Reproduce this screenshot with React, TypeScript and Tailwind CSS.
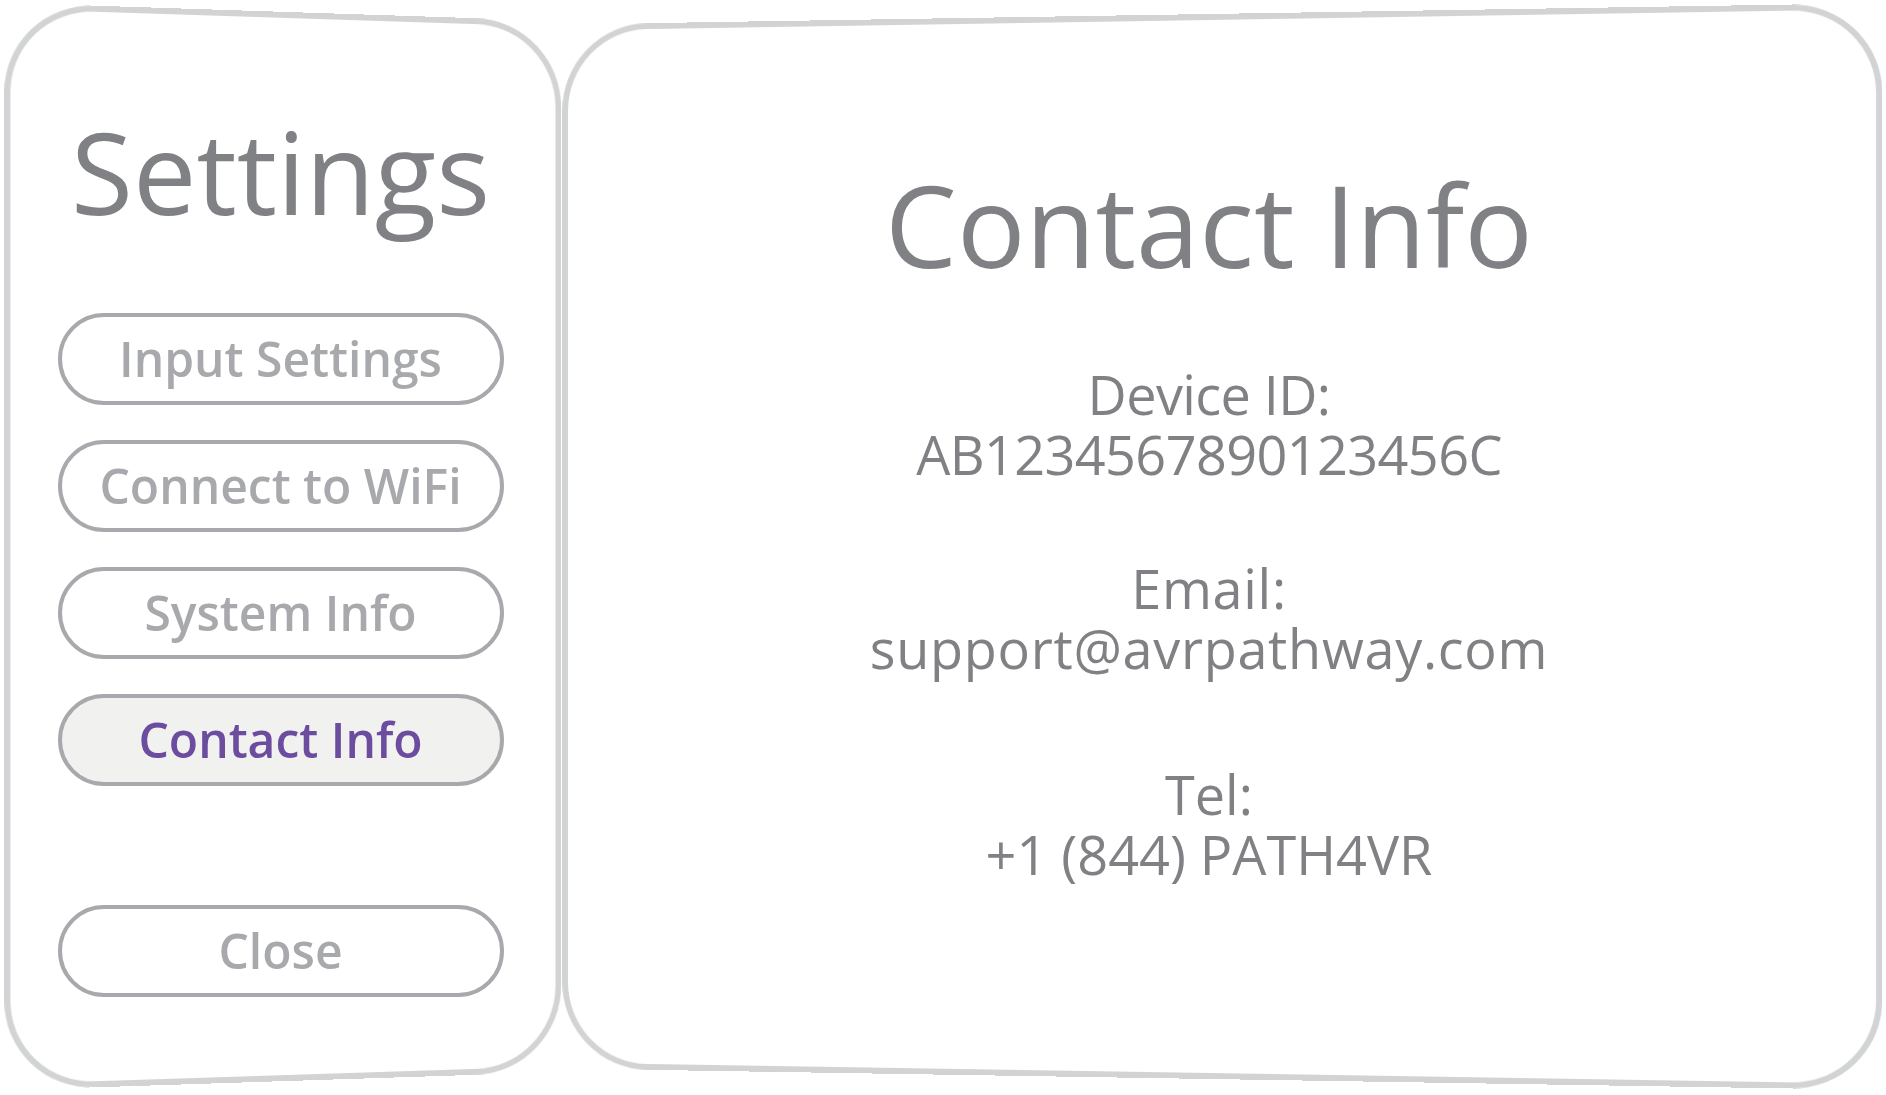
import React from 'react';

const menu = ['Input Settings', 'Connect to WiFi', 'System Info', 'Contact Info'];

function MenuButton({ label, active }: { label: string; active?: boolean }) {
  return (
    <button
      className={
        active
          ? 'w-[446px] h-[92px] rounded-full border-[4px] border-[#a7a9ac] bg-[#f1f1f0] text-[48px] leading-none font-semibold text-[#6b4c9f] flex items-center justify-center'
          : 'w-[446px] h-[92px] rounded-full border-[4px] border-[#a7a9ac] bg-white text-[48px] leading-none font-semibold text-[#a7a9ac] flex items-center justify-center'
      }
    >
      {label}
    </button>
  );
}

function SettingsPanel() {
  return (
    <div className="relative shrink-0 w-[561px] h-[1069px] flex flex-col items-center pr-[14px]">
      {/* curved frame, tilted a little like a VR panel */}
      <div className="absolute inset-0 rounded-[88px] border-[6px] border-[#d1d3d4] pointer-events-none [transform:perspective(2000px)_rotateY(7deg)]" />

      <h1 className="relative mt-[103px] text-[113px] leading-none text-[#808184]">Settings</h1>

      <div className="relative mt-[85px] flex flex-col gap-[35px]">
        {menu.map(item => (
          <MenuButton key={item} label={item} active={item === 'Contact Info'} />
        ))}
      </div>

      <div className="relative mt-[119px]">
        <MenuButton label="Close" />
      </div>
    </div>
  );
}

function ContactPanel() {
  return (
    <div className="relative shrink-0 -ml-[20px] mt-[2px] w-[1322px] h-[1065px] flex flex-col items-center text-[#808184]">
      <div className="absolute inset-0 rounded-[88px] border-[6px] border-[#d1d3d4] pointer-events-none [transform:perspective(2000px)_rotateY(-3.5deg)]" />

      <h2 className="relative mt-[153px] text-[114px] leading-none">Contact Info</h2>

      <div className="relative mt-[83px] text-[54px] leading-[60px] text-center">
        <p className="tracking-[-0.6px]">
          Device ID:
          <br />
          AB1234567890123456C
        </p>
        <p className="mt-[74px] tracking-[0.7px]">
          Email:
          <br />
          support@avrpathway.com
        </p>
        <p className="mt-[86px]">
          Tel:
          <br />
          +1 (844) PATH4VR
        </p>
      </div>
    </div>
  );
}

export default function App() {
  return (
    <div className="w-[1886px] h-[1095px] bg-white overflow-hidden flex items-start pl-[7px] pt-[12px] font-['Open_Sans',sans-serif]">
      <SettingsPanel />
      <ContactPanel />
    </div>
  );
}
